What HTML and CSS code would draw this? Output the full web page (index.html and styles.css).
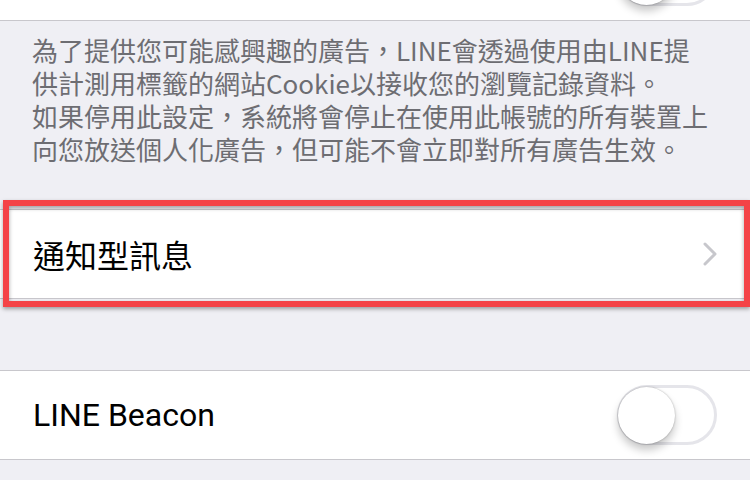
FILE: index.html
```html
<!DOCTYPE html>
<html lang="zh-TW">
<head>
    <meta charset="UTF-8">
    <meta name="viewport" content="width=750, initial-scale=1.0">
    <title>廣告設定</title>
    <link rel="stylesheet" href="styles.css">
</head>
<body>
    <div class="settings">
        <!-- 上方的開關列 (只露出一部分) -->
        <div class="row row-top">
            <span class="row-label"></span>
            <div class="switch"><div class="knob"></div></div>
        </div>

        <!-- 說明文字 -->
        <div class="note">
            <div class="note-line">為了提供您可能感興趣的廣告，LINE會透過使用由LINE提</div>
            <div class="note-line">供計測用標籤的網站Cookie以接收您的瀏覽記錄資料。</div>
            <div class="note-line">如果停用此設定，系統將會停止在使用此帳號的所有裝置上</div>
            <div class="note-line">向您放送個人化廣告，但可能不會立即對所有廣告生效。</div>
        </div>

        <!-- 通知型訊息 -->
        <div class="row row-link">
            <span class="row-label">通知型訊息</span>
            <svg class="chevron" width="14" height="24" viewBox="0 0 14 24">
                <polyline points="2,2 12,12 2,22" fill="none" stroke="#c7c7cc" stroke-width="3" stroke-linecap="round" stroke-linejoin="round"/>
            </svg>
            <div class="highlight"></div>
        </div>

        <div class="gap"></div>

        <!-- LINE Beacon -->
        <div class="row">
            <span class="row-label">LINE Beacon</span>
            <div class="switch"><div class="knob"></div></div>
        </div>
    </div>
</body>
</html>
```

FILE: styles.css
```css
body {
    margin: 0;
    padding: 0;
    width: 750px;
    height: 480px;
    overflow: hidden;
    background-color: #efeff4;
    font-family: Roboto, "Noto Sans CJK TC", sans-serif;
}

.settings {
    display: flex;
    flex-direction: column;
}

/* Linhas brancas */
.row {
    position: relative;
    display: flex;
    align-items: center;
    justify-content: space-between;
    height: 88px;
    padding: 0 33px;
    background-color: #fff;
    border-top: 1px solid #c8c7cc;
    border-bottom: 1px solid #c8c7cc;
    box-sizing: content-box;
}

.row-top {
    margin-top: -68px;
    border-top: none;
}

.row-label {
    font-size: 32px;
    color: #000;
}

.row-link .row-label {
    font-family: "Noto Sans CJK TC", sans-serif;
    font-size: 32px;
}

.chevron {
    display: block;
}

/* Caixa vermelha de destaque */
.highlight {
    position: absolute;
    left: 3px;
    right: 0;
    top: -10px;
    bottom: -9px;
    border: 6px solid #f44347;
    box-shadow: 0 2px 4px rgba(0, 0, 0, 0.35), inset 0 2px 4px rgba(0, 0, 0, 0.35);
    pointer-events: none;
}

/* Texto de explicação */
.note {
    padding: 12px 20px 44px 32px;
    font-family: "Noto Sans CJK TC", sans-serif;
    font-size: 26px;
    color: #6d6d72;
}

.note-line {
    height: 33px;
    line-height: 33px;
    white-space: nowrap;
}

.gap {
    height: 71px;
}

/* Interruptor estilo iOS */
.switch {
    position: relative;
    width: 94px;
    height: 54px;
    border: 3px solid #e5e5ea;
    border-radius: 30px;
    background-color: #fff;
}

.knob {
    position: absolute;
    left: -2px;
    top: -1px;
    width: 57px;
    height: 57px;
    border-radius: 50%;
    background-color: #fff;
    box-shadow: 0 6px 8px rgba(0, 0, 0, 0.22), 0 0 2px rgba(0, 0, 0, 0.3);
}
```
